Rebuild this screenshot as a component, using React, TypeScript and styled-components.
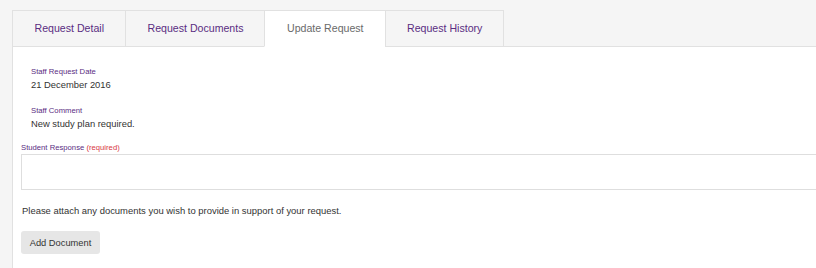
import React, { useState } from "react";
import styled, { createGlobalStyle } from "styled-components";

const GlobalStyle = createGlobalStyle`
  html, body {
    margin: 0;
    padding: 0;
    background: #f5f5f5;
    overflow: hidden;
    font-family: "Liberation Sans", Arial, sans-serif;
  }
`;

const Page = styled.div`
  width: 860px;
  height: 268px;
  padding: 10px 0 0 12px;
  box-sizing: border-box;
  display: flex;
  flex-direction: column;
`;

const TabBar = styled.div`
  display: flex;
  align-items: flex-end;
  position: relative;
  z-index: 1;
`;

const Tab = styled.div<{ $active?: boolean }>`
  height: 37px;
  box-sizing: border-box;
  display: flex;
  align-items: center;
  justify-content: center;
  margin: 0 0 -1px -1px;
  padding: 0 21px 1px 21.5px;
  border: 1px solid #e1e1e1;
  border-bottom: 1px solid ${(p) => (p.$active ? "#ffffff" : "#e1e1e1")};
  background: ${(p) => (p.$active ? "#ffffff" : "#f5f5f5")};
  color: ${(p) => (p.$active ? "#6a6a6a" : "#5a2d82")};
  font-size: 10.6px;
  white-space: nowrap;
  cursor: pointer;
  &:first-child {
    margin-left: 0;
  }
`;

const Panel = styled.div`
  flex: 1;
  background: #ffffff;
  border-left: 1px solid #e1e1e1;
  border-top: 1px solid #e1e1e1;
  padding: 19px 0 0 8px;
  display: flex;
  flex-direction: column;
`;

const Field = styled.div`
  padding-left: 10px;
  display: flex;
  flex-direction: column;
  & + & {
    margin-top: 12.5px;
  }
`;

const Label = styled.div`
  font-size: 7.7px;
  line-height: 12px;
  color: #5a2d82;
`;

const Value = styled.div`
  font-size: 9.4px;
  line-height: 14px;
  color: #333333;
`;

const ResponseLabel = styled(Label)`
  margin-top: 11.5px;
`;

const Required = styled.span`
  color: #d8383f;
`;

const Response = styled.textarea`
  margin: 0;
  height: 36px;
  box-sizing: border-box;
  border: 1px solid #dedede;
  resize: none;
  outline: none;
  width: 100%;
`;

const Hint = styled.p`
  margin: 14px 0 0 1px;
  font-size: 9.45px;
  line-height: 13px;
  color: #333333;
`;

const Button = styled.button`
  align-self: flex-start;
  margin-top: 14px;
  margin-left: 0;
  height: 23px;
  width: 79px;
  padding: 0;
  border: none;
  border-radius: 3px;
  background: #e6e6e6;
  color: #333333;
  font-family: "Liberation Sans", Arial, sans-serif;
  font-size: 9.3px;
`;

const tabs = ["Request Detail", "Request Documents", "Update Request", "Request History"];

export default function App() {
  const [active, setActive] = useState(2);
  return (
    <>
      <GlobalStyle />
      <Page>
        <TabBar>
          {tabs.map((t, i) => (
            <Tab key={t} $active={i === active} onClick={() => setActive(i)}>
              {t}
            </Tab>
          ))}
        </TabBar>
        <Panel>
          <Field>
            <Label>Staff Request Date</Label>
            <Value>21 December 2016</Value>
          </Field>
          <Field>
            <Label>Staff Comment</Label>
            <Value>New study plan required.</Value>
          </Field>
          <ResponseLabel>
            Student Response <Required>(required)</Required>
          </ResponseLabel>
          <Response />
          <Hint>Please attach any documents you wish to provide in support of your request.</Hint>
          <Button>Add Document</Button>
        </Panel>
      </Page>
    </>
  );
}
